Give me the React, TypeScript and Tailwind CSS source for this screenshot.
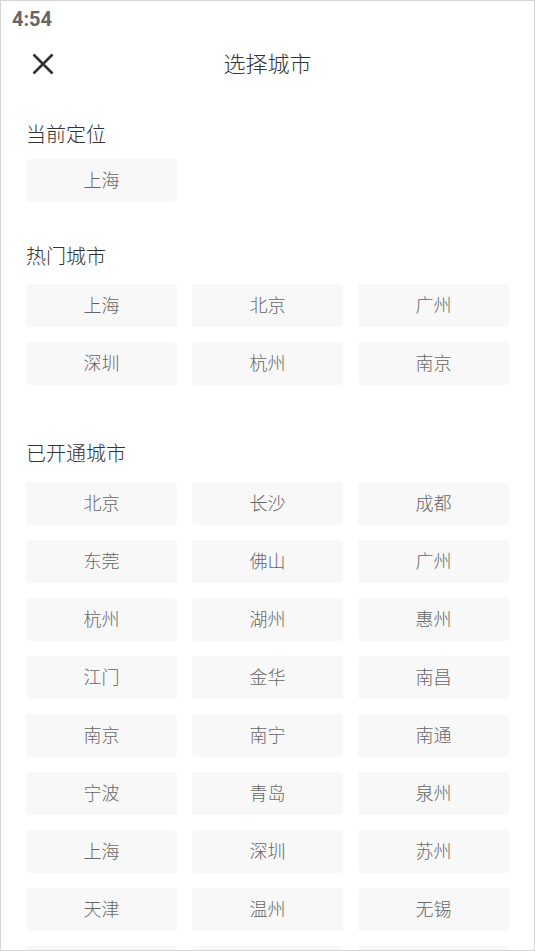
const hotCities = ['上海', '北京', '广州', '深圳', '杭州', '南京'];
const openCities = [
  '北京', '长沙', '成都',
  '东莞', '佛山', '广州',
  '杭州', '湖州', '惠州',
  '江门', '金华', '南昌',
  '南京', '南宁', '南通',
  '宁波', '青岛', '泉州',
  '上海', '深圳', '苏州',
  '天津', '温州', '无锡',
  '武汉', '西安', '厦门',
];

const cjk = "font-['Roboto','Noto_Sans_CJK_SC',sans-serif]";

function CityButton({ name }: { name: string }) {
  return (
    <button className="h-[43px] w-full rounded-[3px] bg-[#f8f8f8] text-[18px] font-light text-[#666] flex items-center justify-center">
      {name}
    </button>
  );
}

function SectionTitle({ children }: { children: string }) {
  return <h2 className="text-[20px] leading-[28px] font-light text-[#333]">{children}</h2>;
}

export default function App() {
  return (
    <div className={`w-[535px] h-[951px] overflow-hidden bg-white border border-[#d4d4d4] ${cjk}`}>
      {/* status bar */}
      <div className="h-[37px] pl-[11px] pt-[5px] text-[20px] leading-[26px] font-bold text-[#666] font-['Roboto',sans-serif]">
        4:54
      </div>

      {/* header */}
      <header className="relative h-[52px] flex items-center justify-center">
        <button className="absolute left-[31px] top-[15px] text-[#333]">
          <svg width="22" height="22" viewBox="0 0 22 22" fill="none" stroke="currentColor" strokeWidth="2.6">
            <path d="M1.5 1.5L20.5 20.5M20.5 1.5L1.5 20.5" />
          </svg>
        </button>
        <h1 className="text-[22px] font-light text-[#333]">选择城市</h1>
      </header>

      <main className="px-[25px]">
        <section className="pt-[31px]">
          <SectionTitle>当前定位</SectionTitle>
          <div className="grid grid-cols-3 gap-[15px] mt-[10px]">
            <CityButton name="上海" />
          </div>
        </section>

        <section className="pt-[41px]">
          <SectionTitle>热门城市</SectionTitle>
          <div className="grid grid-cols-3 gap-[15px] mt-[13px]">
            {hotCities.map((c) => (
              <CityButton key={c} name={c} />
            ))}
          </div>
        </section>

        <section className="pt-[55px]">
          <SectionTitle>已开通城市</SectionTitle>
          <div className="grid grid-cols-3 gap-[15px] mt-[14px]">
            {openCities.map((c, i) => (
              <CityButton key={i} name={c} />
            ))}
          </div>
        </section>
      </main>
    </div>
  );
}
